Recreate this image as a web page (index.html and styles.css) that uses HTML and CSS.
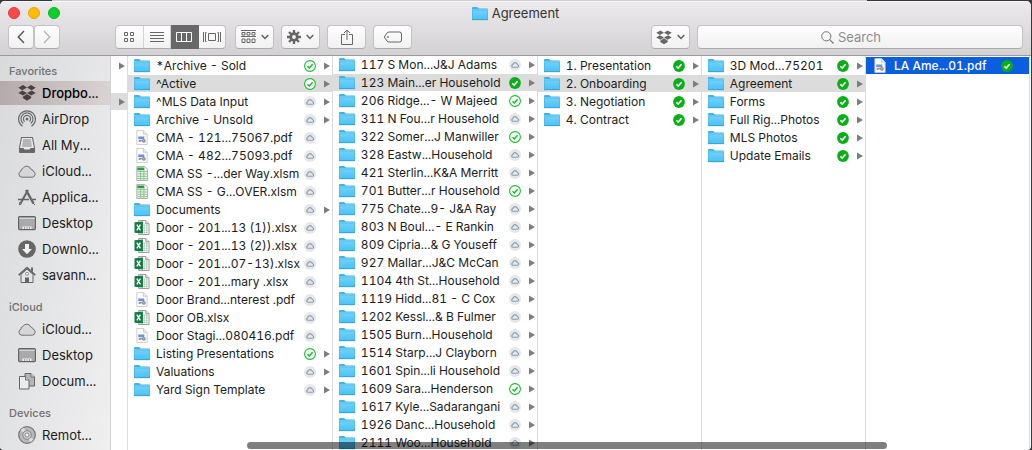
FILE: index.html
```html
<!DOCTYPE html>
<html lang="en">
<head>
<meta charset="utf-8">
<title>Agreement</title>
<link rel="stylesheet" href="styles.css">
</head>
<body>
<svg class="defs" aria-hidden="true">
  <defs>
    <linearGradient id="blue" x1="0" y1="0" x2="0" y2="1"><stop offset="0" stop-color="#6ed2fb"/><stop offset="1" stop-color="#4cc2f8"/></linearGradient>
    <symbol id="folder" viewBox="0 0 16 14"><path d="M0 1.5Q0 .5 1 .5H5.2L6.8 2H15.2Q16 2 16 2.8V13.5H0Z" fill="#43b2e4"/><path d="M.6 4H15.4V12.6H.6Z" fill="url(#blue)"/><path d="M0 3.3H16" stroke="#85dafb" stroke-width=".8"/><path d="M0 13.2H16" stroke="#3a9fd0" stroke-width=".8"/></symbol>
    <symbol id="pdf" viewBox="0 0 16 16"><path d="M2.5 .5H9.5L13.5 4.5V15.5H2.5Z" fill="#fcfcfc" stroke="#c6c6c6" stroke-width=".9"/><path d="M9.5 .5V4.5H13.5" fill="#ececec" stroke="#c2c2c2" stroke-width=".8"/><path d="M4 7H10.5V9.5H4Z" fill="#6d92d6"/><path d="M4.500 12.800V10.500H10V12H6.500V12.800Z" fill="#8f939c"/><circle cx="10" cy="11.500" r="2" fill="#7f8899"/><circle cx="10" cy="11.500" r=".8" fill="#c5cede"/></symbol>
    <symbol id="sheet" viewBox="0 0 16 16"><path d="M2.500.500H11L14 3.500V15.500H2.500Z" fill="#f2f8f1" stroke="#8f9a8f" stroke-width=".8"/><path d="M3 1.500H10.500V4.500H3Z" fill="#2f9a44"/><path d="M3 6H13.500M3 8.500H13.500M3 11H13.500M3 13.500H13.500M6.500 5V15M10 5V15" stroke="#7cbd83" stroke-width=".9"/></symbol>
    <symbol id="excel" viewBox="0 0 16 16"><path d="M4.500.500H12L15.500 4V15.500H4.500Z" fill="#fff" stroke="#8b8b8b" stroke-width=".9"/><path d="M12 .500V4H15.500" fill="#ddd" stroke="#888" stroke-width=".8"/><path d="M9.500 5.500H14M9.500 7.500H14M9.500 9.500H14M9.500 11.500H14M9.500 13.500H14" stroke="#76b78d" stroke-dasharray="1.800 .800"/><path d="M0 2.500L9 1.500V14.500L0 13.500Z" fill="#127a43"/><path d="M2.500 5L6.300 11M6.300 5L2.500 11" stroke="#fff" stroke-width="1.500"/></symbol>
    <symbol id="cloud" viewBox="0 0 12 12"><circle cx="6" cy="6" r="6" fill="#e4e8ec"/><path d="M3.600 8.300H8.700A1.400 1.400 0 0 0 8.800 5.700A1.400 1.400 0 0 0 7.500 4.700A1.900 1.900 0 0 0 3.900 5.600A1.400 1.400 0 0 0 3.600 8.300Z" fill="none" stroke="#8e9ba6" stroke-width="1.100"/></symbol>
    <symbol id="ring" viewBox="0 0 12 12"><circle cx="6" cy="6" r="5.400" fill="#fff" stroke="#10be2c" stroke-width="1.100"/><path d="M3.500 6.300L5.300 8L8.600 4.300" fill="none" stroke="#10be2c" stroke-width="1.500"/></symbol>
    <symbol id="done" viewBox="0 0 12 12"><circle cx="6" cy="6" r="5.900" fill="#0aaf17"/><path d="M3.400 6.300L5.200 8L8.600 4.300" fill="none" stroke="#fff" stroke-width="1.600"/></symbol>
    <symbol id="arrow" viewBox="0 0 6 8"><path d="M0 .500L6 4L0 7.500Z"/></symbol>
    <symbol id="dropbox" viewBox="0 0 18 16"><path d="M5 0L9 2.600L4.300 5.300L.300 2.700ZM13 0L17.700 2.700L13.700 5.300L9 2.600ZM.300 8L4.300 5.400L9 8L5 10.600ZM13.700 5.400L17.700 8L13 10.600L9 8ZM9 8.900L13.200 11.700V13L9 15.700L4.800 13V11.700Z"/></symbol>
    <symbol id="airdrop" viewBox="0 0 18 18"><g fill="none" stroke="#6d6d6d" stroke-width="1.200"><path d="M4.500 16.300A8.400 8.400 0 1 1 13.500 16.300"/><path d="M5.300 13.600A6 6 0 1 1 12.700 13.600"/><path d="M6.600 11.600A3.600 3.600 0 1 1 11.400 11.600"/></g><circle cx="9" cy="9" r="1.500" fill="#6d6d6d"/></symbol>
    <symbol id="tray" viewBox="0 0 18 18"><path d="M3.500 1.500H14.500L16.500 12V15.500Q16.500 16.500 15.500 16.500H2.500Q1.500 16.500 1.500 15.500V12Z" fill="#e9e9e9" stroke="#6b6b6b" stroke-width="1.100"/><path d="M5 4H13M4.700 6H13.300M4.400 8H13.600M4.200 10H13.800" stroke="#777" stroke-width=".9"/><path d="M1.500 12H5.500L6.500 13.500H11.500L12.500 12H16.500V16.500H1.500Z" fill="#666"/></symbol>
    <symbol id="icloud" viewBox="0 0 18 18"><path d="M4 15.200H14.300A3.200 3.200 0 0 0 15 9A2.600 2.600 0 0 0 12.700 7A4.200 4.200 0 0 0 5 6.400A2.700 2.700 0 0 0 2.900 9.200A3.100 3.100 0 0 0 4 15.200Z" fill="#d6d6d8" stroke="#707070"/></symbol>
    <symbol id="apps" viewBox="0 0 18 18"><g fill="none" stroke="#666"><path d="M8 2L15.500 15.500" stroke-width="2.400"/><path d="M10 2L2.500 15.500" stroke-width="2"/><path d="M0 11.500H11M14 11.500H18" stroke-width="1.700"/><path d="M1.800 14L1.500 17L3.800 15.500M15 15L17 17"/></g></symbol>
    <symbol id="desktop" viewBox="0 0 18 16"><rect x=".6" y="1.600" width="16.800" height="13" rx="1" fill="#aaa" stroke="#646464" stroke-width="1.200"/><path d="M1.200 3.400H16.800" stroke="#dcdcdc"/><path d="M4.500 11.500H13.500V14H4.500Z" fill="#eee"/><path d="M6.500 12V14M9 12V14M11.500 12V14" stroke="#888" stroke-width=".8"/></symbol>
    <symbol id="download" viewBox="0 0 18 18"><circle cx="9" cy="9" r="8.800" fill="#666"/><path d="M7 4H11V9H14L9 14.300L4 9H7Z" fill="#f1f1f1"/></symbol>
    <symbol id="home" viewBox="0 0 18 18"><path d="M3 8.500L9 3L15 8.500V16.500H3Z" fill="#e5e5e5" stroke="#666"/><path d="M.700 9.200L9 1.600L17.300 9.200" fill="none" stroke="#666" stroke-width="1.600"/><path d="M13 1.500H15V6L13 4.500ZM7 11.500H11V16.500H7Z" fill="#666"/><circle cx="9" cy="7.800" r="1.500" fill="#fff" stroke="#777" stroke-width=".8"/></symbol>
    <symbol id="docs" viewBox="0 0 18 18"><path d="M7 1.500H13L16.500 5V14H7Z" fill="#b5b5b5" stroke="#666"/><path d="M1.500 4.500H7.500L11 8V17H1.500Z" fill="#ececec" stroke="#666"/><path d="M7.500 4.500V8H11M13 1.500V5H16.500" fill="#ddd" stroke="#666" stroke-width=".9"/></symbol>
    <symbol id="disc" viewBox="0 0 18 18"><circle cx="9" cy="9" r="8.300" fill="#b8b8b8" stroke="#747474" stroke-width="1.200"/><path d="M9 9L2.500 4.500A8 8 0 0 1 6 1.800ZM9 9L15.500 13.500A8 8 0 0 1 12 16.200Z" fill="#ddd"/><circle cx="9" cy="9" r="4.300" fill="#cecece" stroke="#777" stroke-width=".8"/><circle cx="9" cy="9" r="2" fill="#f2f2f2" stroke="#777" stroke-width=".8"/></symbol>
    <symbol id="chevron" viewBox="0 0 8 6"><path d="M.700 1L4 4.400L7.300 1" fill="none" stroke="#5f5f5f" stroke-width="1.500"/></symbol>
  </defs>
</svg>
<div class="backdrop"></div>
<div class="window">
  <header class="header">
    <div class="titlebar">
      <div class="lights">
        <button class="light close" aria-label="Close"></button>
        <button class="light minimize" aria-label="Minimize"></button>
        <button class="light zoom" aria-label="Zoom"></button>
      </div>
      <h1 class="title"><svg class="icon"><use href="#folder"/></svg>Agreement</h1>
    </div>
    <div class="toolbar">
      <div class="nav">
        <button class="btn" aria-label="Back"><svg width="8" height="14" viewBox="0 0 8 14"><path d="M7 1L1.300 7L7 13" fill="none" stroke="#555" stroke-width="1.400"/></svg></button>
        <button class="btn" aria-label="Forward"><svg width="8" height="14" viewBox="0 0 8 14"><path d="M1 1L6.700 7L1 13" fill="none" stroke="#b4b4b4" stroke-width="1.400"/></svg></button>
      </div>
      <div class="views">
        <button aria-label="Icons"><svg width="12" height="12" viewBox="0 0 12 12"><path d="M1.500 1.500H4.500V4.500H1.500ZM7.500 1.500H10.500V4.500H7.500ZM1.500 7.500H4.500V10.500H1.500ZM7.500 7.500H10.500V10.500H7.500Z" fill="none" stroke="#666"/></svg></button>
        <button aria-label="List"><svg width="14" height="12" viewBox="0 0 14 12"><path d="M0 1.500H14M0 4.500H14M0 7.500H14M0 10.500H14" stroke="#666"/></svg></button>
        <button class="on" aria-label="Columns"><svg width="16" height="10" viewBox="0 0 16 10"><path d="M.500.500H15.500V9.500H.500ZM5.500 0V10M10.500 0V10" fill="none" stroke="#fff"/></svg></button>
        <button aria-label="Cover Flow"><svg width="18" height="10" viewBox="0 0 18 10"><path d="M5.500 1.500H12.500V8.500H5.500ZM.500 0V10M3.500 9.500H2.500V.500H3.500M17.500 0V10M14.500 9.500H15.500V.500H14.500" fill="none" stroke="#666"/></svg></button>
      </div>
      <button class="btn menu" aria-label="Arrange"><svg width="15" height="14" viewBox="0 0 15 14"><path d="M0 .500H15M0 6.500H15" stroke="#666"/><path d="M1 2.500H4V5H1ZM6 2.500H9V5H6ZM11 2.500H14V5H11ZM1 9H4V12.500H1ZM6 9H9V12.500H6ZM11 9H14V12.500H11Z" fill="none" stroke="#666"/></svg><svg class="chev"><use href="#chevron"/></svg></button>
      <button class="btn menu" aria-label="Action"><svg width="14" height="14" viewBox="0 0 14 14"><g stroke="#666"><path d="M7 0V14M0 7H14M2 2L12 12M12 2L2 12" stroke-width="2.300"/><circle cx="7" cy="7" r="3.300" fill="#f8f8f8" stroke-width="2.800"/></g></svg><svg class="chev"><use href="#chevron"/></svg></button>
      <button class="btn menu" aria-label="Share"><svg width="12" height="16" viewBox="0 0 12 16"><path d="M4 5.500H.500V15.500H11.500V5.500H8M6 11V1M3 4L6 1L9 4" fill="none" stroke="#666"/></svg></button>
      <button class="btn menu" aria-label="Tags"><svg width="18" height="12" viewBox="0 0 18 12"><path d="M5 1H15.500Q17.500 1 17.500 3V9Q17.500 11 15.500 11H5Q4 11 3 10L.800 7Q.300 6 .800 5L3 2Q4 1 5 1Z" fill="none" stroke="#666"/><circle cx="4" cy="6" r=".9" fill="#777"/></svg></button>
      <div class="spacer"></div>
      <button class="btn menu" aria-label="Dropbox"><svg class="drop" width="16" height="15"><use href="#dropbox"/></svg><svg class="chev"><use href="#chevron"/></svg></button>
      <label class="search"><svg width="13" height="13" viewBox="0 0 13 13"><circle cx="5.300" cy="5.300" r="4.600" fill="none" stroke="#777"/><path d="M8.700 8.700L12.500 12.500" stroke="#777" stroke-width="1.200"/></svg><input type="text" placeholder="Search" aria-label="Search"></label>
    </div>
  </header>
  <div class="content">
    <nav class="sidebar">
      <h2>Favorites</h2>
      <a class="on" href="#"><svg><use href="#dropbox"/></svg>Dropbo...</a>
      <a href="#"><svg><use href="#airdrop"/></svg>AirDrop</a>
      <a href="#"><svg><use href="#tray"/></svg>All My...</a>
      <a href="#"><svg><use href="#icloud"/></svg>iCloud...</a>
      <a href="#"><svg><use href="#apps"/></svg>Applica...</a>
      <a href="#"><svg><use href="#desktop"/></svg>Desktop</a>
      <a href="#"><svg><use href="#download"/></svg>Downlo...</a>
      <a href="#"><svg><use href="#home"/></svg>savann...</a>
      <h2>iCloud</h2>
      <a href="#"><svg><use href="#icloud"/></svg>iCloud...</a>
      <a href="#"><svg><use href="#desktop"/></svg>Desktop</a>
      <a href="#"><svg><use href="#docs"/></svg>Docum...</a>
      <h2>Devices</h2>
      <a href="#"><svg><use href="#disc"/></svg>Remot...</a>
    </nav>
    <main class="columns">
      <div class="col edge">
        <a class="row" href="#" aria-label="Folder"><svg class="arrow"><use href="#arrow"/></svg></a>
        <a class="row" href="#" aria-label="File"></a>
        <a class="row on" href="#" aria-label="Open folder"><svg class="arrow"><use href="#arrow"/></svg></a>
      </div>
      <div class="col wide">
        <a class="row" href="#"><svg class="icon"><use href="#folder"/></svg><span>*Archive - Sold</span><svg class="status"><use href="#ring"/></svg><svg class="arrow"><use href="#arrow"/></svg></a>
        <a class="row on" href="#"><svg class="icon"><use href="#folder"/></svg><span>^Active</span><svg class="status"><use href="#ring"/></svg><svg class="arrow"><use href="#arrow"/></svg></a>
        <a class="row" href="#"><svg class="icon"><use href="#folder"/></svg><span>^MLS Data Input</span><svg class="status"><use href="#cloud"/></svg><svg class="arrow"><use href="#arrow"/></svg></a>
        <a class="row" href="#"><svg class="icon"><use href="#folder"/></svg><span>Archive - Unsold</span><svg class="status"><use href="#cloud"/></svg><svg class="arrow"><use href="#arrow"/></svg></a>
        <a class="row" href="#"><svg class="icon"><use href="#pdf"/></svg><span>CMA - 121...75067.pdf</span><svg class="status"><use href="#cloud"/></svg></a>
        <a class="row" href="#"><svg class="icon"><use href="#pdf"/></svg><span>CMA - 482...75093.pdf</span><svg class="status"><use href="#cloud"/></svg></a>
        <a class="row" href="#"><svg class="icon"><use href="#sheet"/></svg><span>CMA SS -...der Way.xlsm</span><svg class="status"><use href="#cloud"/></svg></a>
        <a class="row" href="#"><svg class="icon"><use href="#sheet"/></svg><span>CMA SS - G...OVER.xlsm</span><svg class="status"><use href="#cloud"/></svg></a>
        <a class="row" href="#"><svg class="icon"><use href="#folder"/></svg><span>Documents</span><svg class="status"><use href="#cloud"/></svg><svg class="arrow"><use href="#arrow"/></svg></a>
        <a class="row" href="#"><svg class="icon"><use href="#excel"/></svg><span>Door - 201...13 (1)).xlsx</span><svg class="status"><use href="#cloud"/></svg></a>
        <a class="row" href="#"><svg class="icon"><use href="#excel"/></svg><span>Door - 201...13 (2)).xlsx</span><svg class="status"><use href="#cloud"/></svg></a>
        <a class="row" href="#"><svg class="icon"><use href="#excel"/></svg><span>Door - 201...07-13).xlsx</span><svg class="status"><use href="#cloud"/></svg></a>
        <a class="row" href="#"><svg class="icon"><use href="#excel"/></svg><span>Door - 201...mary .xlsx</span><svg class="status"><use href="#cloud"/></svg></a>
        <a class="row" href="#"><svg class="icon"><use href="#pdf"/></svg><span>Door Brand...nterest .pdf</span><svg class="status"><use href="#cloud"/></svg></a>
        <a class="row" href="#"><svg class="icon"><use href="#excel"/></svg><span>Door OB.xlsx</span><svg class="status"><use href="#cloud"/></svg></a>
        <a class="row" href="#"><svg class="icon"><use href="#pdf"/></svg><span>Door Stagi...080416.pdf</span><svg class="status"><use href="#cloud"/></svg></a>
        <a class="row" href="#"><svg class="icon"><use href="#folder"/></svg><span>Listing Presentations</span><svg class="status"><use href="#ring"/></svg><svg class="arrow"><use href="#arrow"/></svg></a>
        <a class="row" href="#"><svg class="icon"><use href="#folder"/></svg><span>Valuations</span><svg class="status"><use href="#cloud"/></svg><svg class="arrow"><use href="#arrow"/></svg></a>
        <a class="row" href="#"><svg class="icon"><use href="#folder"/></svg><span>Yard Sign Template</span><svg class="status"><use href="#cloud"/></svg><svg class="arrow"><use href="#arrow"/></svg></a>
      </div>
      <div class="col wide scrolled">
        <a class="row" href="#"><svg class="icon"><use href="#folder"/></svg><span>117 S Mon...J&amp;J Adams</span><svg class="status"><use href="#cloud"/></svg><svg class="arrow"><use href="#arrow"/></svg></a>
        <a class="row on" href="#"><svg class="icon"><use href="#folder"/></svg><span>123 Main...er Household</span><svg class="status"><use href="#done"/></svg><svg class="arrow"><use href="#arrow"/></svg></a>
        <a class="row" href="#"><svg class="icon"><use href="#folder"/></svg><span>206 Ridge...- W Majeed</span><svg class="status"><use href="#ring"/></svg><svg class="arrow"><use href="#arrow"/></svg></a>
        <a class="row" href="#"><svg class="icon"><use href="#folder"/></svg><span>311 N Fou...r Household</span><svg class="status"><use href="#cloud"/></svg><svg class="arrow"><use href="#arrow"/></svg></a>
        <a class="row" href="#"><svg class="icon"><use href="#folder"/></svg><span>322 Somer...J Manwiller</span><svg class="status"><use href="#ring"/></svg><svg class="arrow"><use href="#arrow"/></svg></a>
        <a class="row" href="#"><svg class="icon"><use href="#folder"/></svg><span>328 Eastw...Household</span><svg class="status"><use href="#cloud"/></svg><svg class="arrow"><use href="#arrow"/></svg></a>
        <a class="row" href="#"><svg class="icon"><use href="#folder"/></svg><span>421 Sterlin...K&amp;A Merritt</span><svg class="status"><use href="#cloud"/></svg><svg class="arrow"><use href="#arrow"/></svg></a>
        <a class="row" href="#"><svg class="icon"><use href="#folder"/></svg><span>701 Butter...r Household</span><svg class="status"><use href="#ring"/></svg><svg class="arrow"><use href="#arrow"/></svg></a>
        <a class="row" href="#"><svg class="icon"><use href="#folder"/></svg><span>775 Chate...9- J&amp;A Ray</span><svg class="status"><use href="#cloud"/></svg><svg class="arrow"><use href="#arrow"/></svg></a>
        <a class="row" href="#"><svg class="icon"><use href="#folder"/></svg><span>803 N Boul...- E Rankin</span><svg class="status"><use href="#cloud"/></svg><svg class="arrow"><use href="#arrow"/></svg></a>
        <a class="row" href="#"><svg class="icon"><use href="#folder"/></svg><span>809 Cipria...&amp; G Youseff</span><svg class="status"><use href="#cloud"/></svg><svg class="arrow"><use href="#arrow"/></svg></a>
        <a class="row" href="#"><svg class="icon"><use href="#folder"/></svg><span>927 Mallar...J&amp;C McCan</span><svg class="status"><use href="#cloud"/></svg><svg class="arrow"><use href="#arrow"/></svg></a>
        <a class="row" href="#"><svg class="icon"><use href="#folder"/></svg><span>1104 4th St...Household</span><svg class="status"><use href="#cloud"/></svg><svg class="arrow"><use href="#arrow"/></svg></a>
        <a class="row" href="#"><svg class="icon"><use href="#folder"/></svg><span>1119 Hidd...81 - C Cox</span><svg class="status"><use href="#cloud"/></svg><svg class="arrow"><use href="#arrow"/></svg></a>
        <a class="row" href="#"><svg class="icon"><use href="#folder"/></svg><span>1202 Kessl...&amp; B Fulmer</span><svg class="status"><use href="#cloud"/></svg><svg class="arrow"><use href="#arrow"/></svg></a>
        <a class="row" href="#"><svg class="icon"><use href="#folder"/></svg><span>1505 Burn...Household</span><svg class="status"><use href="#cloud"/></svg><svg class="arrow"><use href="#arrow"/></svg></a>
        <a class="row" href="#"><svg class="icon"><use href="#folder"/></svg><span>1514 Starp...J Clayborn</span><svg class="status"><use href="#cloud"/></svg><svg class="arrow"><use href="#arrow"/></svg></a>
        <a class="row" href="#"><svg class="icon"><use href="#folder"/></svg><span>1601 Spin...li Household</span><svg class="status"><use href="#cloud"/></svg><svg class="arrow"><use href="#arrow"/></svg></a>
        <a class="row" href="#"><svg class="icon"><use href="#folder"/></svg><span>1609 Sara...Henderson</span><svg class="status"><use href="#ring"/></svg><svg class="arrow"><use href="#arrow"/></svg></a>
        <a class="row" href="#"><svg class="icon"><use href="#folder"/></svg><span>1617 Kyle...Sadarangani</span><svg class="status"><use href="#cloud"/></svg><svg class="arrow"><use href="#arrow"/></svg></a>
        <a class="row" href="#"><svg class="icon"><use href="#folder"/></svg><span>1926 Danc...Household</span><svg class="status"><use href="#cloud"/></svg><svg class="arrow"><use href="#arrow"/></svg></a>
        <a class="row" href="#"><svg class="icon"><use href="#folder"/></svg><span>2111 Woo...Household</span><svg class="status"><use href="#cloud"/></svg><svg class="arrow"><use href="#arrow"/></svg></a>
      </div>
      <div class="col">
        <a class="row" href="#"><svg class="icon"><use href="#folder"/></svg><span>1. Presentation</span><svg class="status"><use href="#done"/></svg><svg class="arrow"><use href="#arrow"/></svg></a>
        <a class="row on" href="#"><svg class="icon"><use href="#folder"/></svg><span>2. Onboarding</span><svg class="status"><use href="#done"/></svg><svg class="arrow"><use href="#arrow"/></svg></a>
        <a class="row" href="#"><svg class="icon"><use href="#folder"/></svg><span>3. Negotiation</span><svg class="status"><use href="#done"/></svg><svg class="arrow"><use href="#arrow"/></svg></a>
        <a class="row" href="#"><svg class="icon"><use href="#folder"/></svg><span>4. Contract</span><svg class="status"><use href="#done"/></svg><svg class="arrow"><use href="#arrow"/></svg></a>
      </div>
      <div class="col">
        <a class="row" href="#"><svg class="icon"><use href="#folder"/></svg><span>3D Mod...75201</span><svg class="status"><use href="#done"/></svg><svg class="arrow"><use href="#arrow"/></svg></a>
        <a class="row on" href="#"><svg class="icon"><use href="#folder"/></svg><span>Agreement</span><svg class="status"><use href="#done"/></svg><svg class="arrow"><use href="#arrow"/></svg></a>
        <a class="row" href="#"><svg class="icon"><use href="#folder"/></svg><span>Forms</span><svg class="status"><use href="#done"/></svg><svg class="arrow"><use href="#arrow"/></svg></a>
        <a class="row" href="#"><svg class="icon"><use href="#folder"/></svg><span>Full Rig...Photos</span><svg class="status"><use href="#done"/></svg><svg class="arrow"><use href="#arrow"/></svg></a>
        <a class="row" href="#"><svg class="icon"><use href="#folder"/></svg><span>MLS Photos</span><svg class="status"><use href="#done"/></svg><svg class="arrow"><use href="#arrow"/></svg></a>
        <a class="row" href="#"><svg class="icon"><use href="#folder"/></svg><span>Update Emails</span><svg class="status"><use href="#done"/></svg><svg class="arrow"><use href="#arrow"/></svg></a>
      </div>
      <div class="col">
        <a class="row active" href="#"><svg class="icon"><use href="#pdf"/></svg><span>LA Ame...01.pdf</span><svg class="status"><use href="#done"/></svg></a>
      </div>
    </main>
    <div class="scrollbar"></div>
  </div>
</div>
</body>
</html>
```

FILE: styles.css
```css
* { box-sizing: border-box; }

body {
  margin: 0;
  height: 100vh;
  display: flex;
  flex-direction: column;
  overflow: hidden;
  background: #35383c;
  color: #1c1c1c;
  font-family: Inter, Roboto, "Liberation Sans", sans-serif;
  font-size: 12px;
  font-variant-numeric: tabular-nums;
}

.defs { position: absolute; width: 0; height: 0; }
svg { display: block; flex: none; }
a { color: inherit; text-decoration: none; }
button { padding: 0; border: 0; font: inherit; }

.backdrop {
  height: 1px;
  flex: none;
  background: linear-gradient(90deg, #35383c 5%, #cfcdcf 5%, #cfcdcf 84%, #35383c 84%);
}

.window {
  flex: 1;
  min-height: 0;
  margin-right: 1px;
  display: flex;
  flex-direction: column;
  overflow: hidden;
  border-radius: 5px 5px 4px 4px;
  background: #fff;
}

.header {
  flex: none;
  border-bottom: 1px solid #9c9a9c;
  background: linear-gradient(#eceaec, #d3d1d4);
  box-shadow: inset 0 1px #f8f7f8;
}

.titlebar {
  height: 24px;
  padding: 0 8px;
  display: grid;
  grid-template-columns: 1fr auto 1fr;
  align-items: center;
}

.lights { display: flex; gap: 8px; }
.light { width: 12px; height: 12px; border-radius: 50%; }
.close { background: #fc4a48; border: 1px solid #e23c3a; }
.minimize { background: #fdbc08; border: 1px solid #e5a507; }
.zoom { background: #0bcf2a; border: 1px solid #0cb525; }

.title {
  margin: 0;
  display: flex;
  align-items: center;
  gap: 4px;
  font-size: 13px;
  font-weight: 400;
  color: #333;
}

.toolbar {
  padding: 0 8px 6px;
  display: flex;
  align-items: center;
  gap: 7px;
}

.btn, .views, .search {
  height: 24px;
  border: 1px solid #c4c2c4;
  border-bottom-color: #adabad;
  border-radius: 4px;
  background: linear-gradient(#fefefe, #f1f1f1);
}

.btn { display: flex; align-items: center; justify-content: center; }
.nav { display: flex; margin-right: 48px; }
.nav .btn { width: 26px; }
.menu { width: 39px; gap: 5px; }
.chev { width: 8px; height: 6px; }
.drop { fill: #666; }

.views { width: 111px; display: flex; margin-right: 2px; }
.views button {
  flex: 1;
  display: flex;
  align-items: center;
  justify-content: center;
  background: none;
  border-right: 1px solid #d3d3d3;
}
.views button:last-child { border-right: 0; }
.views .on { background: #686868; margin: -1px 0; border-color: #686868; }

.spacer { flex: 226; }

.search {
  flex: 326;
  display: flex;
  align-items: center;
  justify-content: center;
  gap: 4px;
}
.search input {
  width: 61px;
  padding: 0;
  border: 0;
  outline: 0;
  background: none;
  font: inherit;
  font-size: 13px;
}
.search input::placeholder { color: #8e8e8e; }

.content { flex: 1; min-height: 0; display: flex; position: relative; }

.sidebar {
  flex: none;
  width: 111px;
  padding-top: 5px;
  border-right: 1px solid #d2d2d2;
  background: linear-gradient(100deg, #d9dadc, #efeff0);
  font-size: 13px;
}
.sidebar h2 {
  margin: 0;
  padding-left: 9px;
  font-size: 11px;
  font-weight: 500;
  line-height: 20px;
  color: #707072;
}
.sidebar h2:not(:first-child) { margin-top: 10px; }
.sidebar a {
  height: 24px;
  margin-bottom: 2px;
  padding-left: 18px;
  display: flex;
  align-items: center;
  gap: 6px;
  white-space: nowrap;
}
.sidebar a:has(+ h2) { margin-bottom: 0; }
.sidebar a + h2:not(:first-child) { margin-top: 10px; }
.sidebar svg { width: 18px; height: 18px; }
.sidebar .on {
  background: linear-gradient(90deg, #b5aaab, #dad3d3);
  font-weight: 500;
  color: #000;
  fill: #4a4041;
}

.columns { flex: 1; min-width: 0; display: flex; padding-right: 1px; }

.col {
  flex: 164 1 0;
  min-width: 0;
  padding-top: 1px;
  border-right: 1px solid #dcdcdc;
}
.wide { flex-grow: 205; }
.edge { flex: none; width: 17px; }
.scrolled { padding-top: 0; }

.row {
  height: 17px;
  margin-bottom: 1px;
  padding: 0 2px 0 6px;
  display: grid;
  grid-template-columns: 16px 1fr 12px 8px;
  column-gap: 6px;
  align-items: center;
  white-space: nowrap;
}
.row span { min-width: 0; }
.edge .row { display: flex; justify-content: flex-end; }
.on.row { background: #dcdcdc; }
.active { background: #0a5ee0; color: #fff; font-weight: 500; }

.icon { width: 16px; height: 15px; }
.status { width: 12px; height: 12px; }
.arrow { width: 6px; height: 8px; justify-self: end; fill: #7d7d7d; }

.scrollbar {
  position: absolute;
  bottom: 1px;
  left: 24%;
  right: 14%;
  height: 7px;
  border-radius: 4px;
  background: rgba(0, 0, 0, .5);
}
```
